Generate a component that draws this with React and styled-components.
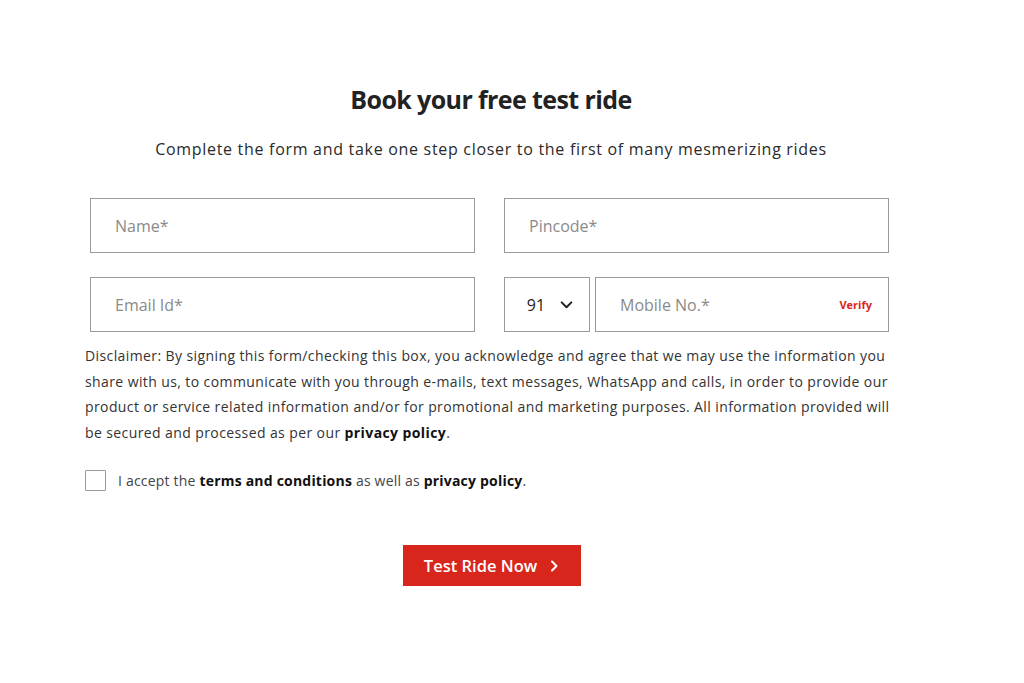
import styled, { createGlobalStyle } from 'styled-components'

const Global = createGlobalStyle`
  html, body {
    margin: 0;
    padding: 0;
    background: #fff;
  }
  body {
    font-family: 'Open Sans', 'Liberation Sans', sans-serif;
    color: #333;
  }
  * {
    box-sizing: border-box;
  }
`

const Page = styled.div`
  width: 1024px;
  height: 683px;
  padding: 83px 0 0 85px;
`

const Wrap = styled.form`
  width: 812px;
  display: flex;
  flex-direction: column;
`

const Title = styled.h1`
  margin: 0;
  text-align: center;
  font-size: 25px;
  line-height: 32px;
  font-weight: 700;
  letter-spacing: -0.6px;
  color: #222;
`

const Sub = styled.p`
  margin: 23px 0 0;
  text-align: center;
  font-size: 16px;
  line-height: 22px;
  letter-spacing: 0.7px;
  color: #2a2a2a;
`

const Grid = styled.div`
  margin: 38px 8px 0 5px;
  display: grid;
  grid-template-columns: 1fr 1fr;
  column-gap: 29px;
  row-gap: 24px;
`

const Field = styled.div`
  height: 55px;
  border: 1.5px solid #9a9a9a;
  display: flex;
  align-items: center;
  padding: 0 24px;
  font-size: 16px;
  color: #8a8a8a;
`

const PhoneRow = styled.div`
  display: flex;
  gap: 5px;
`

const Code = styled.div`
  width: 86px;
  height: 55px;
  border: 1.5px solid #9a9a9a;
  display: flex;
  align-items: center;
  justify-content: center;
  gap: 15px;
  padding-left: 6px;
  font-size: 16px;
  color: #222;
`

const Mobile = styled(Field)`
  flex: 1;
  justify-content: space-between;
  padding-right: 16px;
`

const Verify = styled.span`
  color: #d8261d;
  font-size: 11px;
  font-weight: 700;
`

const Disclaimer = styled.p`
  margin: 11px 0 0;
  font-size: 14px;
  line-height: 25.5px;
  letter-spacing: 0.4px;
  color: #333;

  & b {
    color: #111;
  }
`

const Accept = styled.label`
  margin-top: 25px;
  display: flex;
  align-items: center;
  gap: 12px;
  font-size: 14px;
  letter-spacing: 0.2px;
  color: #444;

  & b {
    color: #111;
  }
`

const Box = styled.span`
  width: 21px;
  height: 21px;
  border: 1.5px solid #999;
  border-radius: 1px;
`

const Button = styled.button`
  align-self: center;
  margin: 54px 0 0 2px;
  width: 178px;
  height: 41px;
  border: none;
  background: #d9261c;
  color: #fff;
  font-family: inherit;
  font-size: 16.5px;
  font-weight: 600;
  display: flex;
  align-items: center;
  justify-content: center;
  gap: 11px;
`

const Chevron = ({ size = 12, w = 2 }) => (
  <svg width={size} height={size} viewBox="0 0 12 12" fill="none">
    <path d="M4 1.5 8.5 6 4 10.5" stroke="currentColor" strokeWidth={w} strokeLinecap="round" strokeLinejoin="round" />
  </svg>
)

const Down = () => (
  <svg width="13" height="13" viewBox="0 0 12 12" fill="none">
    <path d="M1.5 4 6 8.5 10.5 4" stroke="#222" strokeWidth="1.8" strokeLinecap="round" strokeLinejoin="round" />
  </svg>
)

export default function App() {
  return (
    <Page>
      <Global />
      <Wrap>
        <Title>Book your free test ride</Title>
        <Sub>Complete the form and take one step closer to the first of many mesmerizing rides</Sub>
        <Grid>
          <Field>Name*</Field>
          <Field>Pincode*</Field>
          <Field>Email Id*</Field>
          <PhoneRow>
            <Code>
              91 <Down />
            </Code>
            <Mobile>
              Mobile No.*
              <Verify>Verify</Verify>
            </Mobile>
          </PhoneRow>
        </Grid>
        <Disclaimer>
          Disclaimer: By signing this form/checking this box, you acknowledge and agree that we may use the information you
          share with us, to communicate with you through e-mails, text messages, WhatsApp and calls, in order to provide our
          product or service related information and/or for promotional and marketing purposes. All information provided will
          be secured and processed as per our <b>privacy policy</b>.
        </Disclaimer>
        <Accept>
          <Box />
          <span>
            I accept the <b>terms and conditions</b> as well as <b>privacy policy</b>.
          </span>
        </Accept>
        <Button type="button">
          Test Ride Now <Chevron />
        </Button>
      </Wrap>
    </Page>
  )
}
